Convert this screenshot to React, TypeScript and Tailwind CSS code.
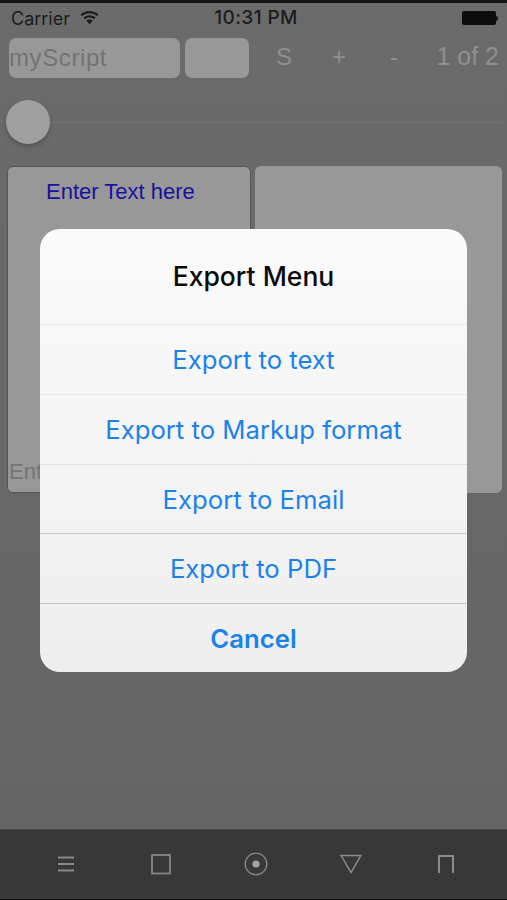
import React from "react";

const menuItems = [
  { label: "Export to text", h: "h-[70px]", line: "border-[#e6e6e6]" },
  { label: "Export to Markup format", h: "h-[70px]", line: "border-[#e8e8e8]" },
  { label: "Export to Email", h: "h-[69px]", line: "border-[#dedede]" },
  { label: "Export to PDF", h: "h-[70px]", line: "border-[#c8c8c8]" },
];

function TabIcons() {
  return (
    <div className="grid h-[67px] grid-cols-[repeat(5,95px)] items-center justify-items-center pl-[18px]">
      <svg width="20" height="18" viewBox="0 0 20 18" fill="none" stroke="#8a8a8a" strokeWidth="2">
        <path d="M2 2.500h16M2 9h16M2 15.500h16" />
      </svg>
      <svg width="22" height="22" viewBox="0 0 22 22" fill="none" stroke="#8a8a8a" strokeWidth="1.7">
        <rect x="2" y="2" width="18" height="18.500" />
      </svg>
      <svg width="24" height="24" viewBox="0 0 24 24" fill="none" stroke="#8a8a8a" strokeWidth="1.300">
        <circle cx="12" cy="12" r="10.800" />
        <circle cx="12" cy="12" r="3.600" fill="#a5a5a5" stroke="none" />
      </svg>
      <svg width="22" height="20" viewBox="0 0 22 20" fill="none" stroke="#8a8a8a" strokeWidth="1.500">
        <path d="M1.200 1.500h19.600L11 18.500z" />
      </svg>
      <svg width="18" height="20" viewBox="0 0 18 20" fill="none" stroke="#8a8a8a" strokeWidth="2">
        <path d="M2 19V2h14v17" />
      </svg>
    </div>
  );
}

export default function App() {
  return (
    <div className="relative flex h-[900px] w-[507px] flex-col overflow-hidden bg-gradient-to-b from-[#6b6b6b] to-[#646464] font-['Liberation_Sans',sans-serif]">
      <div className="h-[3px] bg-[#141414]" />

      {/* status bar */}
      <div className="flex h-[30px] items-center justify-between pl-[11px] pr-[9px] font-['Inter',sans-serif] text-[#1c1c1c]">
        <div className="flex w-[150px] items-center gap-[10px]">
          <span className="text-[18px]">Carrier</span>
          <svg width="19" height="14" viewBox="0 0 19 14" fill="#1c1c1c">
            <path d="M9.500 0C6 0 2.900 1.300.4 3.500l1.500 1.600C4 3.200 6.600 2.200 9.500 2.200s5.500 1 7.600 2.900l1.500-1.600C16.100 1.300 13 0 9.500 0z" />
            <path d="M9.500 4.300c-2.300 0-4.400.9-6 2.300l1.500 1.600c1.200-1.100 2.800-1.700 4.500-1.700s3.300.6 4.500 1.700l1.500-1.600c-1.600-1.400-3.700-2.300-6-2.300z" />
            <path d="M9.500 8.600c-1.200 0-2.300.5-3.100 1.200l3.100 3.400 3.100-3.400c-.8-.7-1.900-1.200-3.100-1.200z" />
          </svg>
        </div>
        <span className="ml-[3px] text-[19px] font-medium tracking-[0.4px]">10:31 PM</span>
        <div className="flex w-[150px] items-center justify-end">
          <div className="h-[14px] w-[34px] rounded-[2px] bg-[#0c0c0c]" />
          <div className="h-[5px] w-[2px] rounded-r-sm bg-[#1c1c1c]" />
        </div>
      </div>

      {/* toolbar */}
      <div className="mt-[5px] flex h-[40px] items-center pl-[9px] pr-[9px]">
        <div className="flex h-[40px] w-[171px] items-center rounded-[7px] bg-[#989898]">
          <span className="text-[24px] tracking-[0.6px] text-[#737373]">myScript</span>
        </div>
        <div className="ml-[5px] h-[40px] w-[64px] rounded-[7px] bg-[#989898]" />
        <div className="-mr-px flex flex-1 -translate-y-px items-center pl-[27px] text-[#8f8f8f]">
          <span className="text-[24px]">S</span>
          <span className="ml-[40px] text-[24px]">+</span>
          <span className="ml-[44px] text-[24px]">-</span>
          <span className="ml-auto text-[25px]">1 of 2</span>
        </div>
      </div>

      {/* slider */}
      <div className="mt-[22px] flex h-[44px] items-center pl-[6px] pr-[6px]">
        <div className="h-[44px] w-[44px] shrink-0 rounded-full bg-[#a0a0a0] shadow-[0_3px_5px_rgba(0,0,0,0.2)]" />
        <div className="h-px flex-1 bg-[#747474]" />
      </div>

      {/* text panels */}
      <div className="mt-[22px] flex h-[327px] gap-[4px] pl-[7px] pr-[5px]">
        <div className="flex w-[244px] flex-col justify-between rounded-[6px] border border-[#555555] bg-[#989898] pb-[5px] pl-[1px] pr-[2px] pt-[10px]">
          <span className="pl-[37px] text-[22px] leading-[30px] text-[#1a12a0]">Enter Text here</span>
          <span className="text-[22px] leading-[30px] text-[#757575]">Enter Text here</span>
        </div>
        <div className="flex-1 rounded-[6px] bg-[#989898]" />
      </div>

      <div className="flex-1" />

      {/* tab bar */}
      <div className="h-[70px] border-t border-[#474747] bg-[#383838]">
        <TabIcons />
      </div>
      <div className="h-px bg-[#0c0c0c]" />

      {/* export dialog */}
      <div className="absolute left-[40px] top-[229px] w-[427px] overflow-hidden rounded-[20px] bg-gradient-to-b from-[#fbfbfb] to-[#eeeeee] font-['Inter',sans-serif]">
        <div className="flex h-[95px] items-center justify-center text-[26.500px] font-medium text-[#0a0a0a]">
          Export Menu
        </div>
        {menuItems.map((item) => (
          <div
            key={item.label}
            className={`flex ${item.h} items-center justify-center border-t ${item.line} pt-[2px] text-[25.700px] text-[#1a82ea]`}
          >
            {item.label}
          </div>
        ))}
        <div className="flex h-[69px] items-center justify-center border-t border-[#c6c6c6] pt-[2px] text-[25.700px] font-semibold text-[#1a82ea]">
          Cancel
        </div>
      </div>
    </div>
  );
}
